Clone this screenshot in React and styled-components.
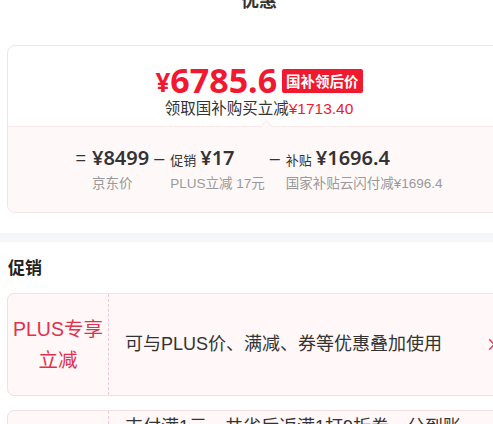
import styled, { createGlobalStyle } from 'styled-components';

const RED = '#f0192f';

const GlobalStyle = createGlobalStyle`
  html, body {
    margin: 0;
    padding: 0;
    overflow: hidden;
    background: #fff;
  }
  #root {
    width: 518px;
    font-family: "Liberation Sans", "Noto Sans CJK SC", sans-serif;
    color: #333;
  }
`;

const breakdown = [
  { op: '=', value: '¥8499', label: '京东价' },
  { op: '–', tag: '促销', value: '¥17', label: 'PLUS立减 17元' },
  { op: '–', tag: '补贴', value: '¥1696.4', label: '国家补贴云闪付减¥1696.4' },
];

const promos = [
  {
    title: ['PLUS专享', '立减'],
    text: '可与PLUS价、满减、券等优惠叠加使用',
  },
  {
    title: ['支付满减'],
    text: '支付满1元，共省后返满1打9折券，分到账后可在我的优惠券中查看并使用，限部分自营商品参与，以实际结算页面展示为准，每个账号限领一次',
  },
];

export default function App() {
  return (
    <>
      <GlobalStyle />
      <Header>优惠</Header>

      <PriceCard>
        <PriceTop>
          <PriceLine>
            <Yen>¥</Yen>
            <BigPrice>6785.6</BigPrice>
            <Badge>国补领后价</Badge>
          </PriceLine>
          <SubLine>
            领取国补购买立减<RedText>¥1713.40</RedText>
          </SubLine>
        </PriceTop>
        <PriceBottom>
          {breakdown.map((item) => (
            <Item key={item.label}>
              <Op>{item.op}</Op>
              <Stack>
                <ValueRow>
                  {item.tag && <Tag>{item.tag}</Tag>}
                  <Value>{item.value}</Value>
                </ValueRow>
                <Label>{item.label}</Label>
              </Stack>
            </Item>
          ))}
        </PriceBottom>
      </PriceCard>

      <Band />

      <SectionTitle>促销</SectionTitle>
      <PromoList>
        {promos.map((p) => (
          <PromoCard key={p.text}>
            <PromoTitle>
              {p.title.map((t) => (
                <div key={t}>{t}</div>
              ))}
            </PromoTitle>
            <PromoText>{p.text}</PromoText>
            <Chevron viewBox="0 0 10 16" aria-hidden="true">
              <path d="M2 2l6 6-6 6" fill="none" stroke="#e2455d" strokeWidth="2" strokeLinecap="round" strokeLinejoin="round" />
            </Chevron>
          </PromoCard>
        ))}
      </PromoList>
    </>
  );
}

//------------Styled Comp------------
const Header = styled.h2`
  margin: -14px 0 0;
  height: 59px;
  line-height: 30px;
  text-align: center;
  font-size: 18px;
  font-weight: 700;
  color: #333;
`;

const PriceCard = styled.section`
  margin: 0 7px;
  border: 1px solid #f3e4e4;
  border-radius: 8px;
  overflow: hidden;
`;

const PriceTop = styled.div`
  height: 80px;
  padding-top: 20px;
  box-sizing: border-box;
  display: flex;
  flex-direction: column;
  align-items: center;
`;

const PriceLine = styled.div`
  display: flex;
  align-items: center;
  height: 28px;
  line-height: 28px;
  color: ${RED};
  font-family: "Noto Sans", "Liberation Sans", sans-serif;
  font-weight: 700;
`;

const Yen = styled.span`
  font-size: 26px;
  margin-top: 3px;
`;

const BigPrice = styled.span`
  font-size: 34px;
`;

const Badge = styled.span`
  margin-left: 5px;
  margin-top: 2px;
  padding: 0 4px;
  height: 24px;
  line-height: 24px;
  background: ${RED};
  color: #fff;
  border-radius: 2px;
  font-family: "Noto Sans CJK SC", sans-serif;
  font-size: 14.5px;
  font-weight: 700;
`;

const SubLine = styled.div`
  margin-top: 4px;
  font-size: 15.5px;
  line-height: 22px;
  color: #333;
`;

const RedText = styled.span`
  color: ${RED};
`;

const PriceBottom = styled.div`
  position: relative;
  height: 86px;
  box-sizing: border-box;
  padding-top: 18px;
  background: #fff8f8;
  border-top: 1px solid #fae8e8;
  display: flex;
  justify-content: center;
  gap: 5px;

  &::before {
    content: '';
    position: absolute;
    top: -5px;
    left: 254px;
    width: 8px;
    height: 8px;
    background: #fff8f8;
    border-top: 1px solid #fae8e8;
    border-left: 1px solid #fae8e8;
    transform: rotate(45deg);
  }
`;

const Item = styled.div`
  display: flex;
  align-items: flex-start;
`;

const Op = styled.span`
  font-size: 18px;
  line-height: 26px;
  margin-right: 6px;
  color: #333;
`;

const Stack = styled.div`
  display: flex;
  flex-direction: column;
`;

const ValueRow = styled.div`
  display: flex;
  align-items: baseline;
  height: 26px;
`;

const Tag = styled.span`
  font-size: 13px;
  margin-right: 4px;
  color: #333;
`;

const Value = styled.span`
  font-family: "Noto Sans", "Liberation Sans", sans-serif;
  font-size: 20px;
  font-weight: 600;
  line-height: 26px;
  color: #333;
`;

const Label = styled.span`
  margin-top: 4px;
  font-size: 13.5px;
  line-height: 18px;
  color: #999;
  white-space: nowrap;
`;

const Band = styled.div`
  margin-top: 20px;
  height: 9px;
  background: #f5f6f8;
`;

const SectionTitle = styled.h3`
  margin: 0;
  padding: 16px 8px 0;
  height: 51px;
  box-sizing: border-box;
  line-height: 22px;
  font-size: 17px;
  font-weight: 700;
  color: #222;
`;

const PromoList = styled.div`
  display: flex;
  flex-direction: column;
  gap: 14px;
  margin: 0 7px;
`;

const PromoCard = styled.div`
  display: flex;
  align-items: center;
  min-height: 101px;
  border: 1px solid #f2dfe1;
  border-radius: 7px;
  background: #fff7f8;
`;

const PromoTitle = styled.div`
  align-self: stretch;
  width: 100px;
  flex-shrink: 0;
  display: flex;
  flex-direction: column;
  justify-content: center;
  align-items: center;
  border-right: 1px dashed #f0c8cf;
  font-size: 19.5px;
  line-height: 31px;
  color: #e3304a;
  white-space: nowrap;
`;

const PromoText = styled.div`
  flex: 1;
  padding: 3px 0 3px 16px;
  font-size: 18px;
  line-height: 27px;
  color: #333;
`;

const Chevron = styled.svg`
  width: 8px;
  height: 13px;
  margin: 0 14px 0 10px;
  flex-shrink: 0;
`;
